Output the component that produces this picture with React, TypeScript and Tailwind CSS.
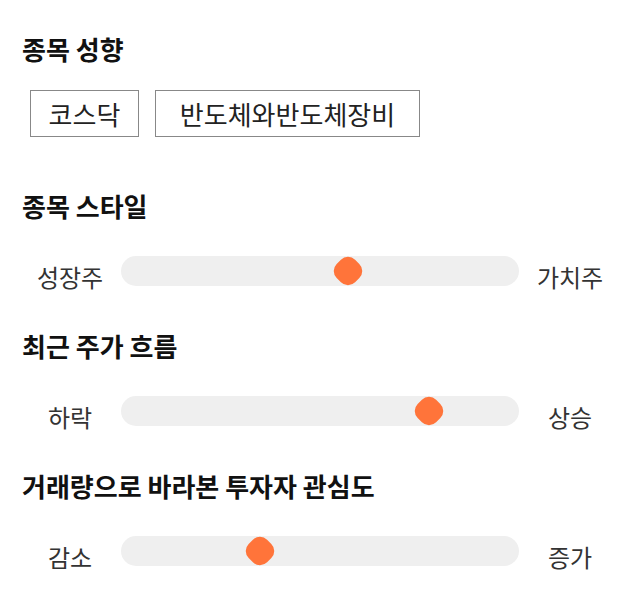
const FONT = "font-['Noto_Sans_CJK_KR','Noto_Sans',sans-serif]";

type SliderRow = {
  title: string;
  left: string;
  right: string;
  pos: number;
};

const ROWS: SliderRow[] = [
  { title: "종목 스타일", left: "성장주", right: "가치주", pos: 57 },
  { title: "최근 주가 흐름", left: "하락", right: "상승", pos: 77.3 },
  { title: "거래량으로 바라본 투자자 관심도", left: "감소", right: "증가", pos: 35 },
];

function Slider({ left, right, pos }: Omit<SliderRow, "title">) {
  return (
    <div className="flex items-start">
      <span className="w-[96px] shrink-0 pt-[6px] text-center text-[24px] leading-[30px] text-[#333]">{left}</span>
      <div className="relative mx-[3px] h-[30px] flex-1 rounded-full bg-[#efefef]">
        <span
          className="absolute top-1/2 h-[26px] w-[26px] -translate-x-1/2 -translate-y-1/2 rotate-45 rounded-[10px] bg-[#ff743a]"
          style={{ left: `${pos}%` }}
        />
      </div>
      <span className="w-[96px] shrink-0 pt-[6px] text-center text-[24px] leading-[30px] text-[#333]">{right}</span>
    </div>
  );
}

export default function App() {
  return (
    <div className={`${FONT} h-[606px] w-[640px] bg-white px-[22px] pt-[32px] text-[#111]`}>
      <h2 className="text-[26px] font-bold leading-[34px]">종목 성향</h2>
      <div className="mt-[24px] flex gap-[16px] pl-[8px]">
        <span className="flex h-[47px] w-[109px] items-center justify-center border border-[#888] text-[26px] text-[#222]">
          코스닥
        </span>
        <span className="flex h-[47px] w-[265px] items-center justify-center border border-[#888] text-[26px] text-[#222]">
          반도체와반도체장비
        </span>
      </div>
      {ROWS.map((r, i) => (
        <section key={r.title} className={i === 0 ? "mt-[52px]" : "mt-[37px]"}>
          <h2 className="text-[26px] font-bold leading-[34px]">{r.title}</h2>
          <div className="mt-[33px]">
            <Slider left={r.left} right={r.right} pos={r.pos} />
          </div>
        </section>
      ))}
    </div>
  );
}
